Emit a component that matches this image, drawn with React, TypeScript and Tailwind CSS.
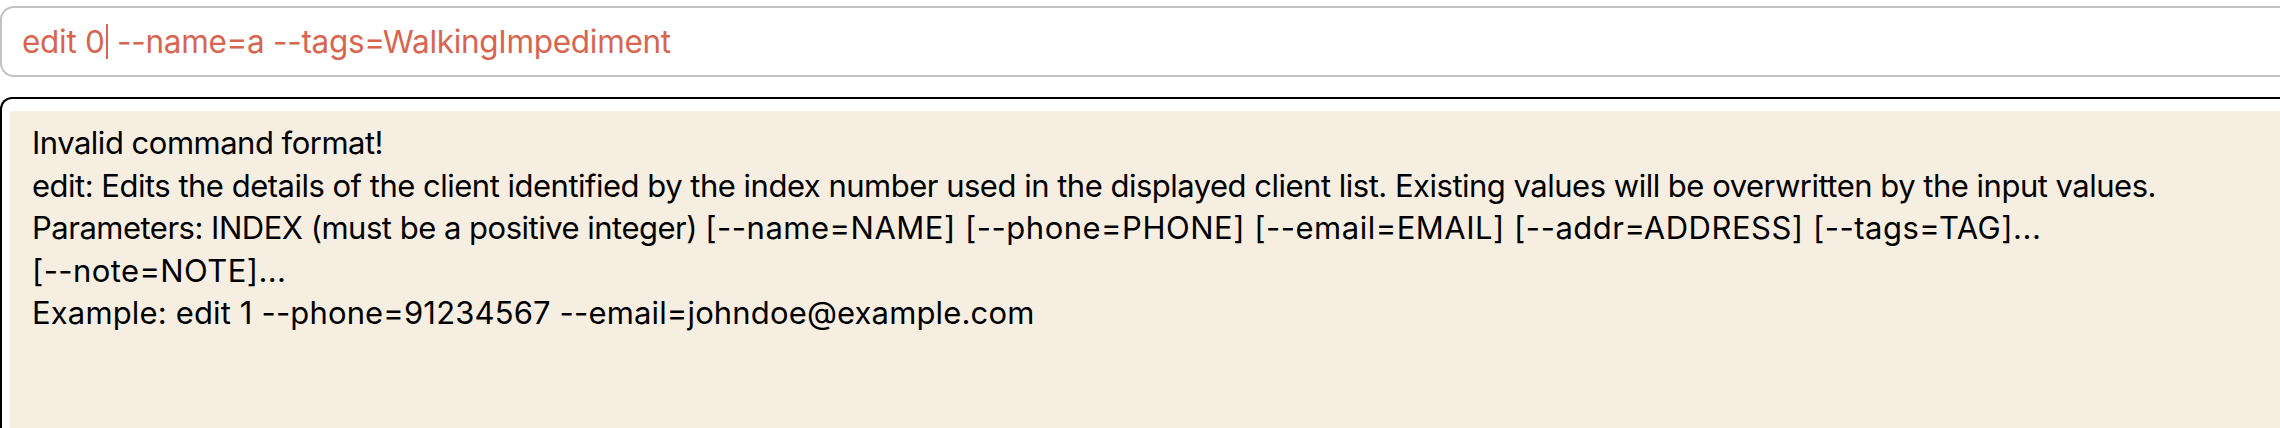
import React from "react";

export default function App() {
  return (
    <div className="w-[2280px] h-[428px] overflow-hidden bg-white font-[Inter,sans-serif]">
      <div className="w-[2320px] pt-[6px]">
        <div className="h-[71px] border-2 border-[#c2c2c2] rounded-[14px] flex items-center pl-[20px] text-[31.5px] text-[#d8654f] tracking-[-0.3px] whitespace-pre">
          <span>edit 0</span>
          <span className="inline-block w-[2px] h-[35px] bg-[#d8654f] mx-[1px]" />
          <span> --name=a --tags=WalkingImpediment</span>
        </div>
        <div className="mt-[20px] border-t-2 border-l-2 border-black rounded-tl-[12px] pl-[8px] pt-[12px] h-[340px]">
          <div className="bg-[#f7eee2] h-full pl-[22px] pt-[11px] text-[31px] leading-[42.6px] text-black tracking-[-0.5px] whitespace-pre">
            <div>Invalid command format!</div>
            <div>
              edit: Edits the details of the client identified by the index number used in the displayed client list. Existing values will be overwritten by the input values.
            </div>
            <div>
              <span>Parameters: INDEX (must be a positive integer) </span>
              <span className="tracking-[0.5px]">
                [--name=NAME] [--phone=PHONE] [--email=EMAIL] [--addr=ADDRESS] [--tags=TAG]...
              </span>
            </div>
            <div className="tracking-[0.4px]">[--note=NOTE]...</div>
            <div className="tracking-[0.15px]">Example: edit 1 --phone=91234567 --email=johndoe@example.com</div>
          </div>
        </div>
      </div>
    </div>
  );
}
